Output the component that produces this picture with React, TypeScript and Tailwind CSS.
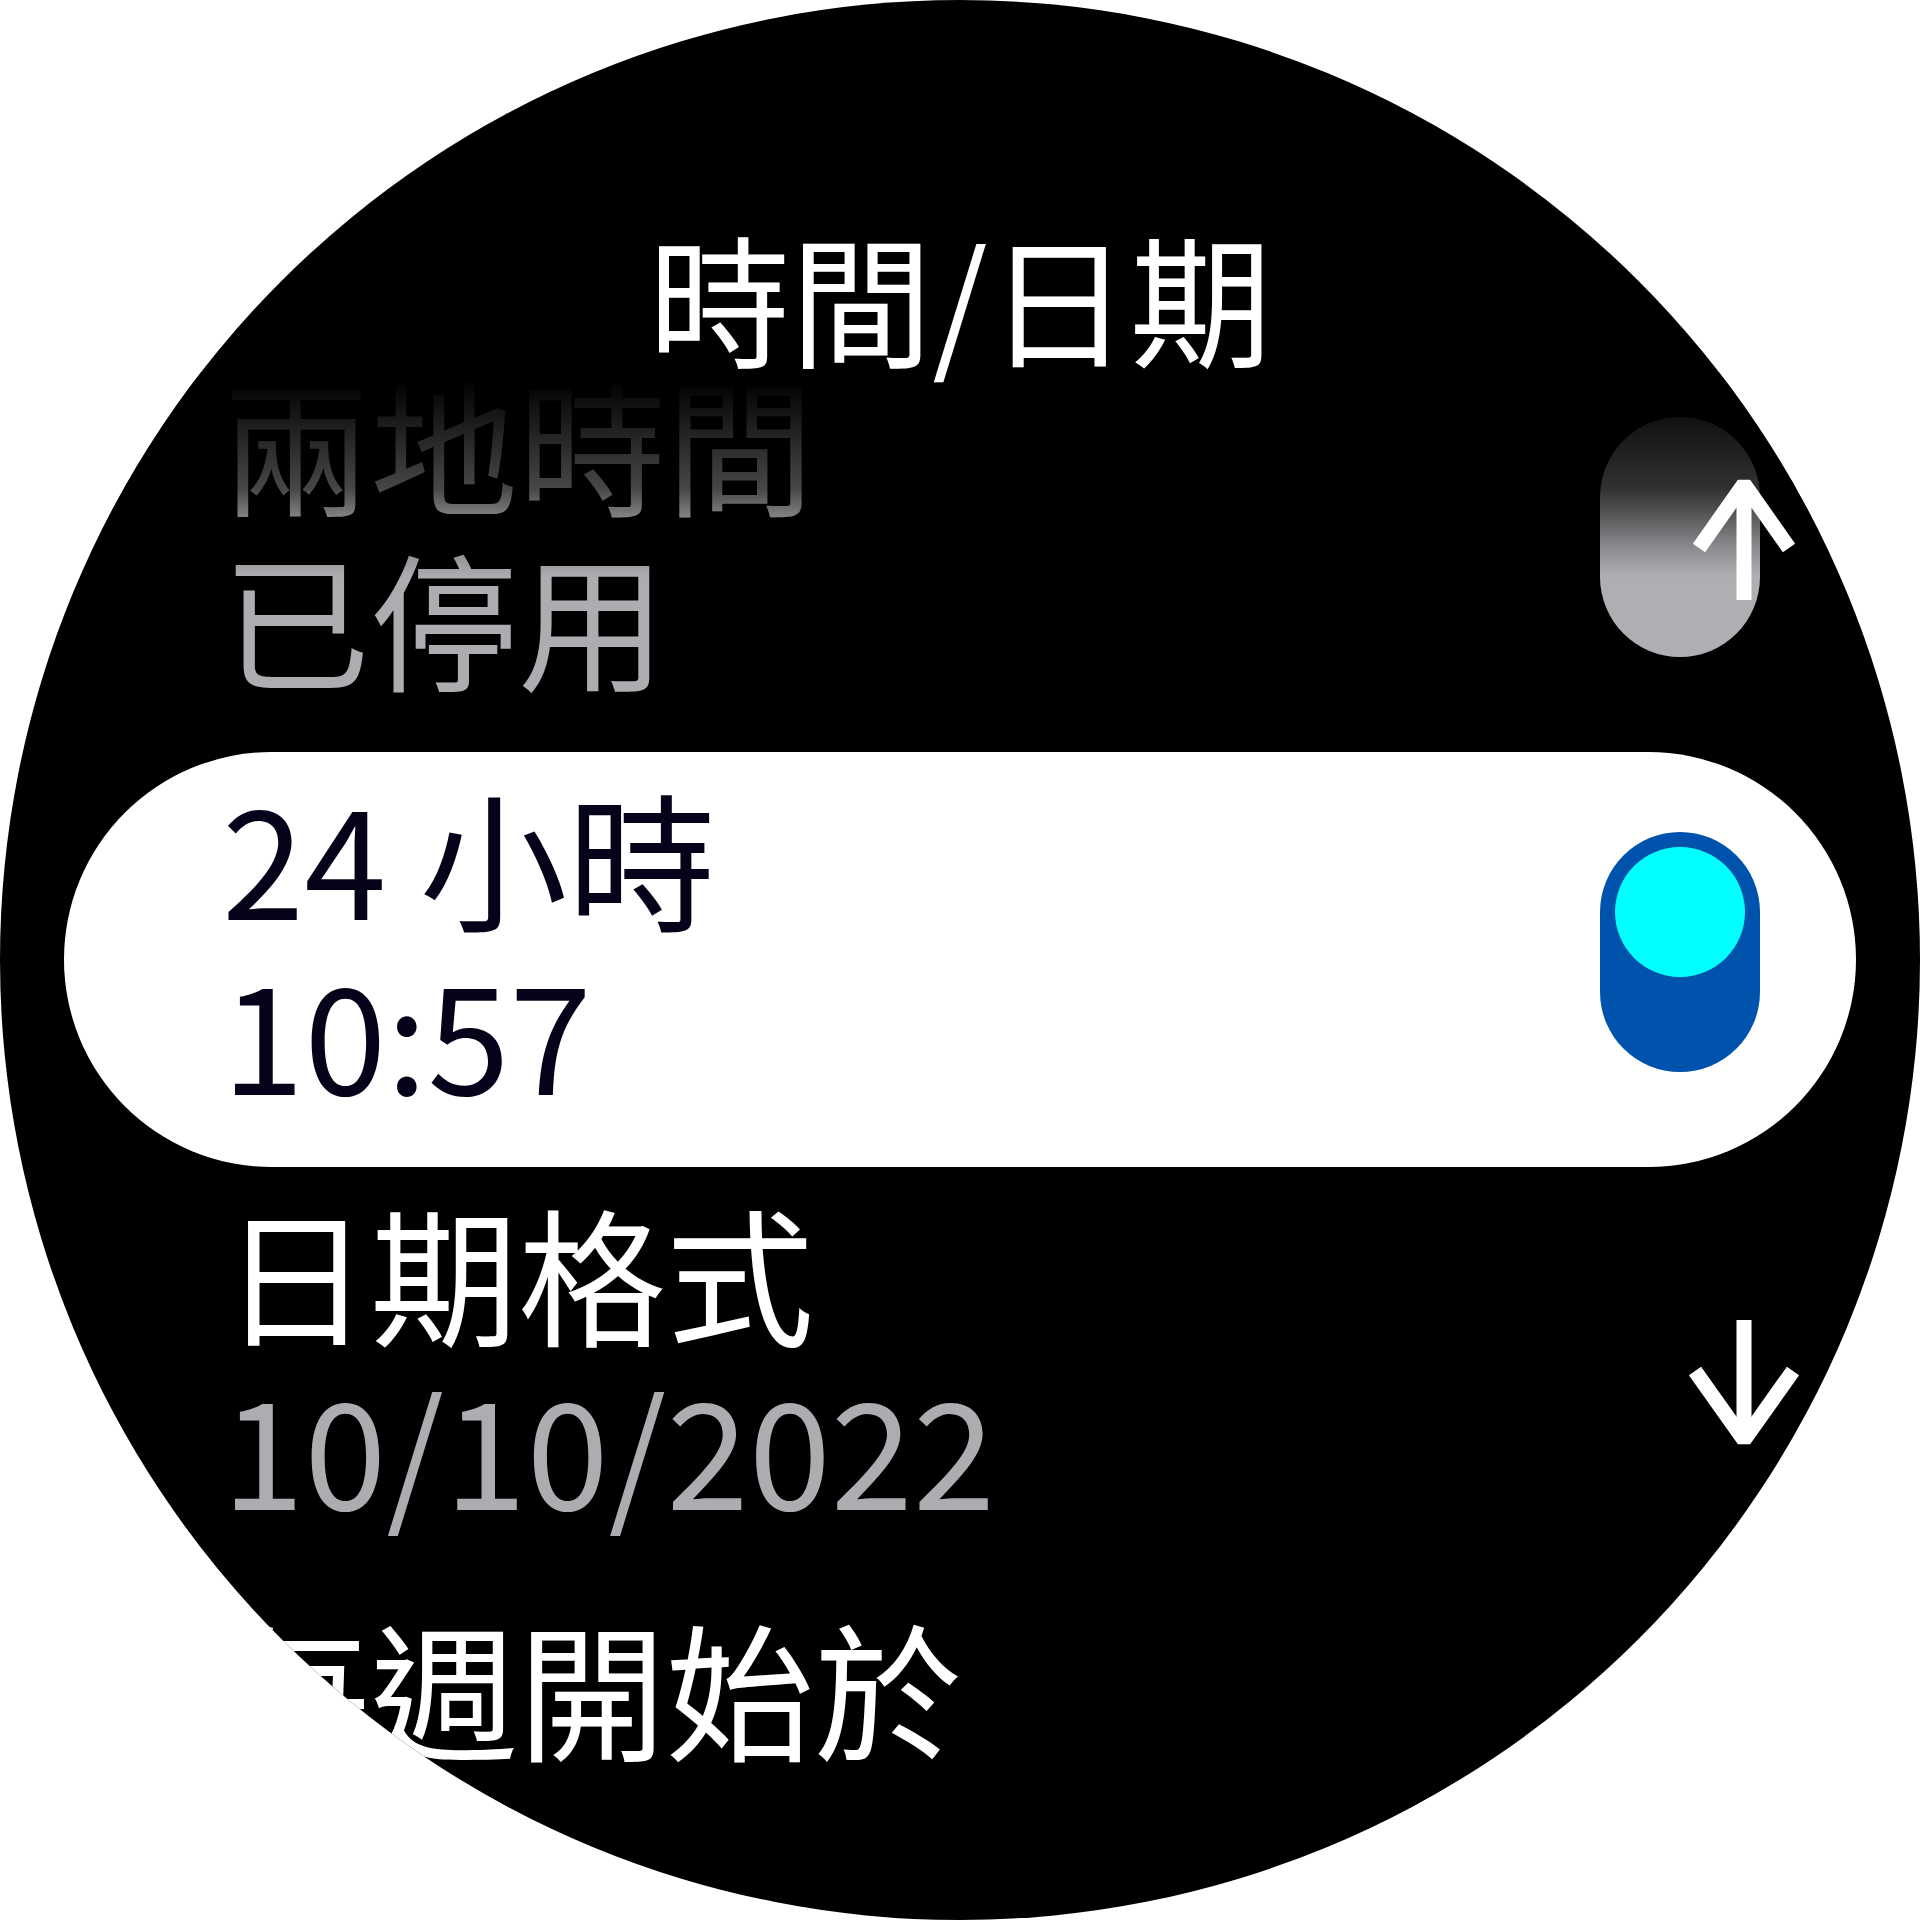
import { ReactNode } from 'react'

const font = "font-['Noto_Sans_CJK_TC','Noto_Sans',sans-serif]"

function Toggle({ on }: { on: boolean }) {
  if (on) {
    return (
      <div className="mt-[80px] w-[160px] h-[240px] rounded-full bg-[#0053ad] p-[15px] shrink-0">
        <div className="w-[130px] h-[130px] rounded-full bg-[#00ffff]" />
      </div>
    )
  }
  return <div className="mt-[80px] w-[160px] h-[240px] rounded-full bg-[#b0aeb3] shrink-0" />
}

function Item({
  title,
  value,
  selected,
  toggle,
  titleColor = 'text-white',
  valueColor = 'text-[#adacb1]',
}: {
  title: string
  value?: string
  selected?: boolean
  toggle?: ReactNode
  titleColor?: string
  valueColor?: string
}) {
  return (
    <div
      className={`mx-[64px] h-[415px] shrink-0 flex justify-between items-start pl-[158px] pr-[96px] ${
        selected ? 'bg-white rounded-full' : ''
      }`}
    >
      <div className="pt-[16px] flex flex-col text-[148px] leading-[175px] whitespace-nowrap">
        <div className={selected ? 'text-[#04031a]' : titleColor}>{title}</div>
        {value && <div className={selected ? 'text-[#04031a]' : valueColor}>{value}</div>}
      </div>
      {toggle}
    </div>
  )
}

export default function App() {
  return (
    <div className={`w-[1920px] h-[1920px] bg-white ${font}`}>
      <div className="relative w-[1920px] h-[1920px] rounded-full bg-black overflow-hidden flex flex-col">
        {/* header */}
        <div className="h-[337px] shrink-0 relative z-20">
          <div className="pt-[222px] text-center text-white text-[142px] leading-[146px] whitespace-nowrap">
            時間/日期
          </div>
        </div>

        {/* list */}
        <Item title="兩地時間" value="已停用" toggle={<Toggle on={false} />} />
        <Item title="24 小時" value="10:57" selected toggle={<Toggle on />} />
        <Item title="日期格式" value="10/10/2022" />
        <Item title="每週開始於" />

        {/* fade on top of list */}
        <div className="absolute left-0 right-0 top-[372px] h-[205px] z-10 bg-[linear-gradient(to_bottom,#000_4%,rgba(0,0,0,0.72)_57%,rgba(0,0,0,0.5)_70%,rgba(0,0,0,0.2)_86%,transparent)]" />

        {/* scroll arrows */}
        <svg
          className="absolute inset-0 z-30 pointer-events-none"
          width="1920"
          height="1920"
          viewBox="0 0 1920 1920"
          fill="none"
          stroke="#ffffff"
          strokeWidth="15"
        >
          <line x1="1744" y1="486" x2="1744" y2="600" />
          <polyline points="1699,548 1744,484 1789,548" strokeLinejoin="bevel" />
          <line x1="1744" y1="1320" x2="1744" y2="1436" />
          <polyline points="1695,1371 1744,1440 1793,1371" strokeLinejoin="bevel" />
        </svg>
      </div>
    </div>
  )
}
